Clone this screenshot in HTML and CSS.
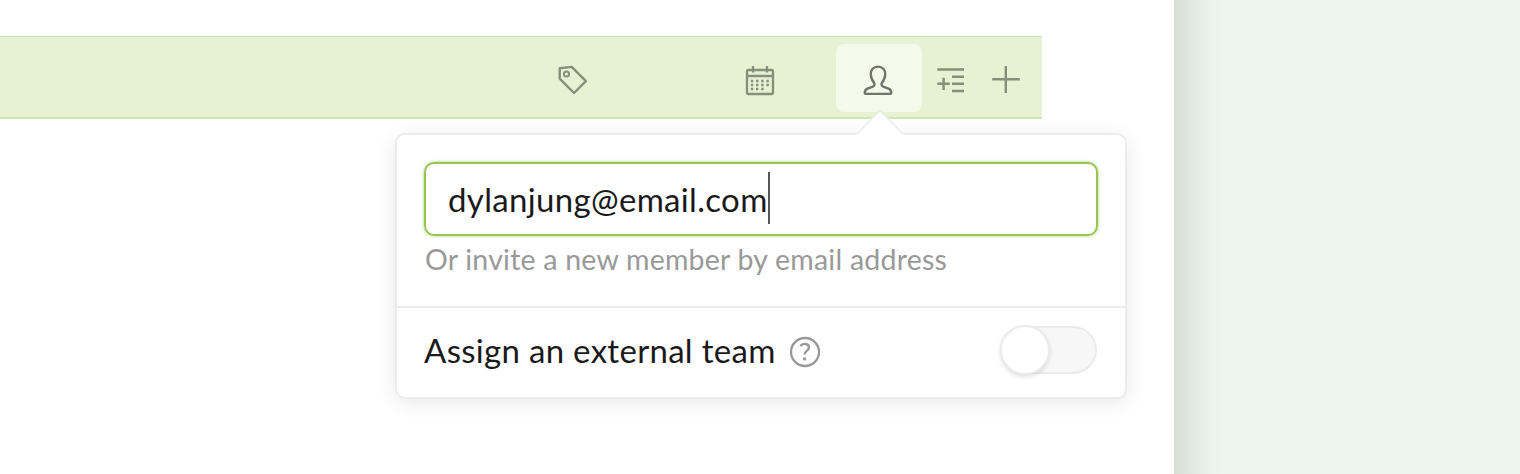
FILE: index.html
```html
<!DOCTYPE html>
<html lang="en">
<head>
<meta charset="utf-8">
<title>Assign member</title>
<link rel="stylesheet" href="styles.css">
</head>
<body>
<div class="page">
  <main class="sheet">
    <div class="task-row">
      <span class="tool tool-tag">
        <svg width="40" height="40" viewBox="0 0 40 40" fill="none" stroke="#84917a" stroke-width="2.4" stroke-linejoin="round"><path d="M6.8 8.2 18.7 6.9 32.9 21.1 21 33 6.7 18.7Z"/><circle cx="13.5" cy="14" r="2.6" stroke-width="2"/></svg>
      </span>
      <span class="tool tool-date">
        <svg width="40" height="40" viewBox="0 0 40 40" fill="none" stroke="#84917a" stroke-width="2.3"><rect x="7" y="10" width="26" height="24" rx="1.5"/><path d="M7 16H33M13 6V12.5M27 6V12.5"/><path d="M10.8 21H30M10.8 25H30M10.8 29H24.5" stroke-width="2.4" stroke-dasharray="2.4 2.8"/></svg>
      </span>
      <button class="tool tool-assign" type="button" aria-label="Assign">
        <svg width="40" height="40" viewBox="0 0 40 40" fill="none" stroke="#6f756b" stroke-width="2.4" stroke-linejoin="round"><path d="M20 6.6C15.4 6.6 12.7 9.8 12.8 14.2C12.9 18.2 14.4 20.8 16.2 23C17 24.6 16.2 26.1 14.4 26.8L10 28.4C7.5 29.3 6.8 30.4 6.8 32.5C6.8 33.5 7.1 33.9 8.3 33.9H31.7C32.9 33.9 33.2 33.5 33.2 32.5C33.2 30.4 32.5 29.3 30 28.4L25.6 26.8C23.8 26.1 23 24.6 23.8 23C25.6 20.8 27.1 18.2 27.2 14.2C27.3 9.8 24.6 6.6 20 6.6Z"/></svg>
      </button>
      <span class="tool tool-subtask">
        <svg width="40" height="40" viewBox="0 0 40 40" fill="none" stroke="#84917a" stroke-width="2.5"><path d="M6.3 9.6H33M21 16.7H33M21 23.8H33M21 31H33M6.3 23.8H18.8M12.6 17.7V30"/></svg>
      </span>
      <span class="tool tool-add">
        <svg width="40" height="40" viewBox="0 0 40 40" fill="none" stroke="#84917a" stroke-width="2.4"><path d="M6.2 19.3H33.8M19.8 6V33"/></svg>
      </span>
    </div>
    <section class="popover">
      <svg class="popover-arrow" width="52" height="26" viewBox="0 0 52 26"><path d="M0 25 3 23 24 1.6Q26-.2 28 1.6L49 23 52 25Z" fill="#ececec"/><path d="M2 26 24.8 2.9Q26 1.8 27.2 2.9L50 26Z" fill="#fff"/></svg>
      <div class="invite">
        <div class="email-field"><span>dylanjung@email.com</span><i class="caret"></i></div>
        <p class="hint">Or invite a new member by email address</p>
      </div>
      <div class="external">
        <span class="label">Assign an external team</span>
        <svg class="help" width="32" height="32" viewBox="0 0 32 32" fill="none" stroke="#999" stroke-width="2.3"><circle cx="16" cy="16" r="14"/><path d="M11.3 10C13.3 7.1 20 7.1 20 11.4C20 14.6 15.6 14.6 15.6 18.6"/><circle cx="15.6" cy="22.9" r="1.7" fill="#999" stroke="none"/></svg>
        <span class="toggle"><i class="knob"></i></span>
      </div>
    </section>
  </main>
  <div class="backdrop"></div>
</div>
</body>
</html>
```
FILE: styles.css
```css
* { box-sizing: border-box; }

body {
  margin: 0;
  background: #edf5ee;
  font-family: Lato, "Open Sans", sans-serif;
  color: #1a1a1a;
}

.page { display: flex; height: 474px; overflow: hidden; }

.sheet {
  flex: none;
  width: 1174px;
  height: 474px;
  padding-top: 36px;
  background: #fff;
}

.backdrop {
  flex: 1;
  background: linear-gradient(to right, #d5ded7 0, #dae3dc 9px, #e0e9e2 18px, #e7efe8 28px, #ebf3ec 38px, #edf5ee 50px);
}

.task-row {
  display: flex;
  align-items: center;
  width: 1042px;
  height: 83px;
  padding-left: 553px;
  background: #e7f1d3;
  border-top: 1.5px solid #c4e2a2;
  border-bottom: 2px solid #cde6b2;
}

.tool { display: flex; width: 40px; height: 40px; padding: 0; border: 0; }
.tool-tag { margin-top: 5px; }
.tool-date { margin: 6px 0 0 147px; }
.tool-assign {
  align-items: center;
  justify-content: center;
  width: 86px;
  height: 68px;
  margin: 1px 0 0 56px;
  padding: 4px 3px 0 0;
  border-radius: 8px;
  background: #f4faea;
}
.tool-assign svg { flex: none; }
.tool-subtask { margin: 5px 0 0 9px; }
.tool-add { margin: 5px 0 0 15px; }

.popover {
  position: relative;
  width: 732px;
  height: 266px;
  margin: 14px 0 0 395px;
  border: 2px solid #ececec;
  border-radius: 10px;
  background: #fff;
  box-shadow: 0 4px 20px rgba(0, 0, 0, .09);
}

.popover-arrow { position: absolute; top: -25px; left: 457px; }

.invite {
  height: 173px;
  padding: 27px 27px 0;
  border-bottom: 2px solid #ececec;
}

.email-field {
  display: flex;
  align-items: center;
  height: 74px;
  padding-left: 22px;
  border: 2px solid #98c654;
  border-radius: 10px;
  box-shadow: 0 0 3px rgba(152, 198, 84, .9);
  font-size: 33px;
  letter-spacing: .33px;
}

.caret { width: 2px; height: 52px; margin-top: -2px; background: #555; }

.hint {
  margin: 5px 0 0 1px;
  color: #999;
  font-size: 28.5px;
  letter-spacing: .22px;
  line-height: 36px;
  white-space: nowrap;
}

.external {
  display: flex;
  align-items: center;
  height: 89px;
  padding: 0 28px 0 27px;
}

.label {
  margin-top: -6px;
  font-size: 33px;
  letter-spacing: .3px;
  white-space: nowrap;
}
.help { margin: -1px 0 0 13px; }

.toggle {
  width: 97px;
  height: 48px;
  margin-left: auto;
  margin-top: -5px;
  border: 2px solid #ebebeb;
  border-radius: 24px;
  background: #f7f7f7;
}

.knob {
  display: block;
  width: 50px;
  height: 50px;
  margin: -3px 0 0 -2px;
  border: 2px solid #ebebeb;
  border-radius: 50%;
  background: #fff;
  box-shadow: 0 2px 4px rgba(0, 0, 0, .12);
}
```
